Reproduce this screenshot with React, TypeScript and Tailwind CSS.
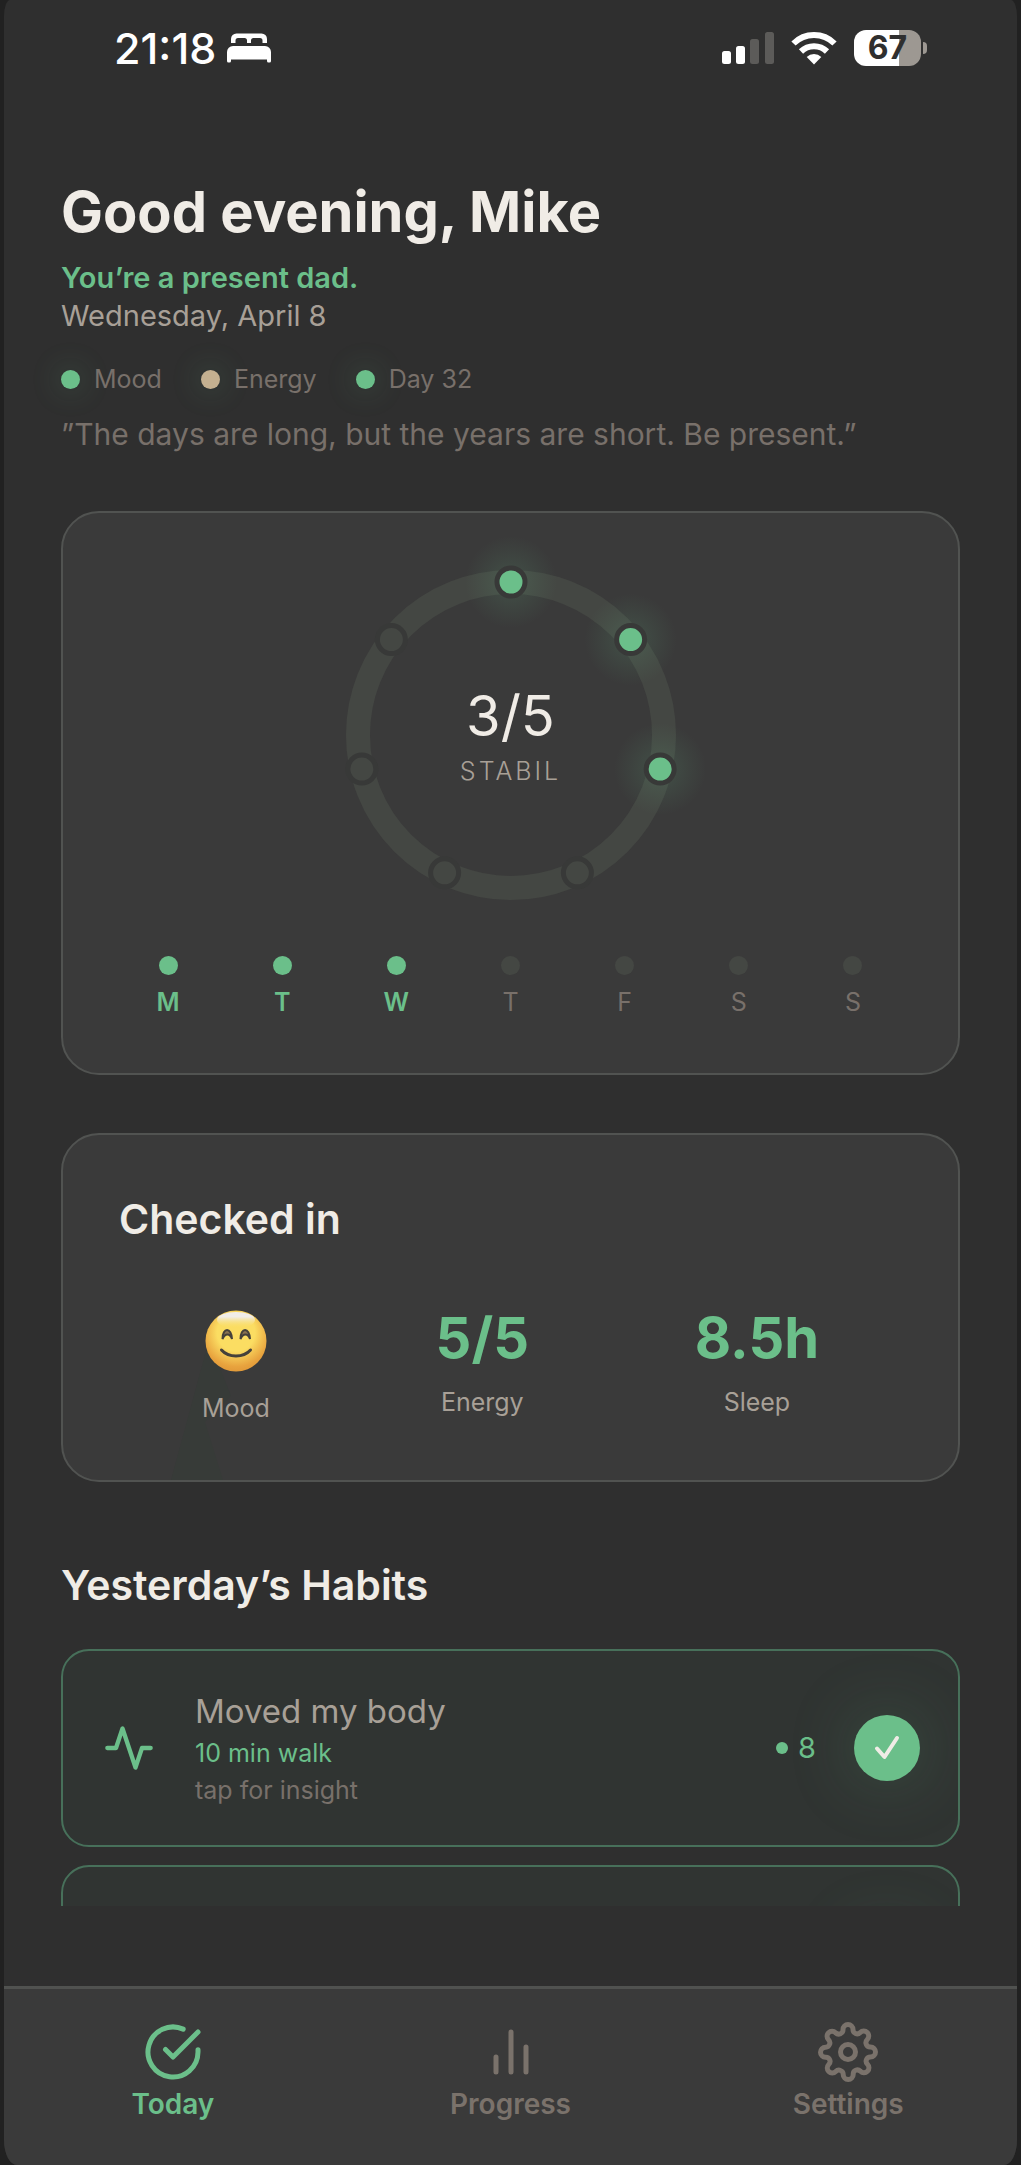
import type { ReactNode } from "react";

const GREEN = "#6bbf8a";

const signals = [
  { label: "Mood", dot: "bg-[#6bbf8a]" },
  { label: "Energy", dot: "bg-[#c4b090]" },
  { label: "Day 32", dot: "bg-[#6bbf8a]" },
];

const week = ["M", "T", "W", "T", "F", "S", "S"];
const daysDone = 3;

function StatusBar() {
  return (
    <div className="flex h-24 shrink-0 items-center justify-between pl-[110px] pr-[90px] text-white">
      <div className="flex items-center gap-[11px]">
        <span className="text-[43px] leading-none font-medium">21:18</span>
        <svg width="44" height="30" viewBox="0 0 44 30" fill="currentColor" aria-label="Sleep focus">
          <path d="M4 10V6a5.500 5.500 0 0 1 5.500-5.500h25A5.500 5.500 0 0 1 40 6v4h-4.500V7.500a2.500 2.500 0 0 0-2.500-2.500h-6.500a2.500 2.500 0 0 0-2.500 2.500V10h-4V7.500A2.500 2.500 0 0 0 17.500 5H11a2.500 2.500 0 0 0-2.500 2.500V10z" />
          <path d="M0 19a6 6 0 0 1 6-6h32a6 6 0 0 1 6 6v9a1.500 1.500 0 0 1-1.500 1.500h-1A1.500 1.500 0 0 1 40 28v-1.500H4V28a1.500 1.500 0 0 1-1.500 1.500h-1A1.500 1.500 0 0 1 0 28z" />
        </svg>
      </div>
      <div className="flex items-center gap-[17px]">
        <svg width="52" height="34" viewBox="0 0 52 34" aria-label="Signal">
          <rect x="0" y="20" width="9" height="13" rx="2.500" fill="#fff" />
          <rect x="14" y="15" width="9" height="18" rx="2.500" fill="#fff" />
          <rect x="28" y="8" width="9" height="25" rx="2.500" fill="#5c5b59" />
          <rect x="43" y="1" width="9" height="32" rx="2.500" fill="#5c5b59" />
        </svg>
        <svg width="46" height="34" viewBox="0 0 46 34" aria-label="Wi-Fi">
          <g fill="none" stroke="#fff" strokeWidth="6">
            <path d="M2.500 12.500a29 29 0 0 1 41 0" />
            <path d="M10 20.500a18.500 18.500 0 0 1 26 0" />
          </g>
          <path d="M23 33.500l-7.300-7.500a10.500 10.500 0 0 1 14.600 0z" fill="#fff" />
        </svg>
        <div className="flex items-center gap-0.5">
          <div className="flex h-9 w-[67px] items-center justify-center rounded-[12px] bg-linear-to-r from-white from-67% to-[#9d9892] to-67% text-[32px] leading-none font-bold text-[#2f2f2f]">
            67
          </div>
          <div className="h-3 w-1 rounded-r-full bg-[#9d9892]" />
        </div>
      </div>
    </div>
  );
}

function WeekRing() {
  const points = week.map((_, i) => {
    const a = (i / week.length) * Math.PI * 2 - Math.PI / 2;
    return { x: 165 + 153 * Math.cos(a), y: 165 + 153 * Math.sin(a), on: i < daysDone };
  });

  return (
    <div className="relative mx-auto size-[330px]">
      <svg width="330" height="330" viewBox="0 0 330 330" className="overflow-visible">
        <defs>
          <radialGradient id="dotGlow">
            <stop offset="0.3" stopColor={GREEN} stopOpacity="0.12" />
            <stop offset="0.7" stopColor={GREEN} stopOpacity="0.05" />
            <stop offset="1" stopColor={GREEN} stopOpacity="0" />
          </radialGradient>
        </defs>
        <circle cx="165" cy="165" r="153" fill="none" stroke="#444743" strokeWidth="24" />
        {points.map((p, i) => (
          <g key={i}>
            {p.on && <circle cx={p.x} cy={p.y} r="46" fill="url(#dotGlow)" />}
            <circle cx={p.x} cy={p.y} r="14" fill={p.on ? GREEN : "#444743"} stroke="#383938" strokeWidth="5" />
          </g>
        ))}
      </svg>
      {/* score sits in the middle of the ring */}
      <div className="absolute inset-0 flex flex-col items-center justify-center pt-2">
        <span className="text-[56px] leading-[64px] text-[#f0ece6]">3/5</span>
        <span className="text-[25px] leading-[46px] font-light tracking-[3px] text-[#a8a097]">STABIL</span>
      </div>
    </div>
  );
}

function Card({ children, className }: { children: ReactNode; className: string }) {
  return (
    <section className={`relative rounded-[38px] border-2 border-[#515351] bg-[#3a3a3a] ${className}`}>
      {children}
    </section>
  );
}

function Stat({ label, children }: { label: string; children: ReactNode }) {
  return (
    <div className="flex flex-col items-center gap-3.5">
      {children}
      <span className="text-[25px] leading-9 text-[#a8a097]">{label}</span>
    </div>
  );
}

function Smiley() {
  return (
    <svg width="62" height="70" viewBox="0 0 62 70" role="img" aria-label="Happy">
      <defs>
        <radialGradient id="face" cx="0.5" cy="0.36" r="0.62">
          <stop offset="0.5" stopColor="#fbdd62" />
          <stop offset="0.9" stopColor="#e8a33e" />
          <stop offset="1" stopColor="#e39c3a" />
        </radialGradient>
        <linearGradient id="shine" x1="0" y1="0" x2="0" y2="1">
          <stop offset="0.3" stopColor="#f1ede8" />
          <stop offset="1" stopColor="#fbdd62" stopOpacity="0" />
        </linearGradient>
      </defs>
      <circle cx="31" cy="35" r="30.500" fill="url(#face)" />
      <ellipse cx="31" cy="14" rx="19" ry="8" fill="url(#shine)" />
      <g fill="#8a7350" stroke="#45413b" strokeLinecap="round" strokeWidth="2">
        <path d="M17.500 33c0-12 9-12 9.500 0-2-6-7-6-9.500 0z" />
        <path d="M35.500 33c0-12 9-12 9.500 0-2-6-7-6-9.500 0z" />
        <path d="M16.500 44c7 8 22 8 29 0" fill="none" strokeWidth="3" />
      </g>
    </svg>
  );
}

function CheckButton() {
  return (
    <button
      aria-label="Habit done"
      className="flex size-[66px] items-center justify-center rounded-full bg-[#6bbf8a] shadow-[0_0_70px_rgba(107,191,138,0.22)]"
    >
      <svg width="26" height="26" viewBox="0 0 26 26" fill="none" stroke="#f0ece6" strokeWidth="4" strokeLinecap="round" strokeLinejoin="round">
        <path d="M3 13.500l7.500 8.500L23 3" />
      </svg>
    </button>
  );
}

function HabitCard({ children }: { children?: ReactNode }) {
  return (
    <li className="flex min-h-[198px] items-center overflow-hidden rounded-[28px] border-2 border-[#47705a] bg-[#303432] pl-10 pr-[38px]">
      <div className="flex flex-1 items-center">{children}</div>
      <CheckButton />
    </li>
  );
}

function NavItem({ label, active, children }: { label: string; active?: boolean; children: ReactNode }) {
  return (
    <a
      href="#"
      className={`flex flex-1 flex-col items-center gap-1 pt-[33px] pb-[43px] ${active ? "text-[#6bbf8a]" : "text-[#7a726b]"}`}
    >
      <svg width="60" height="60" viewBox="0 0 24 24" fill="none" stroke="currentColor" strokeWidth="2" strokeLinecap="round" strokeLinejoin="round">
        {children}
      </svg>
      <span className="text-[28px] leading-9 font-semibold">{label}</span>
    </a>
  );
}

export default function App() {
  return (
    <div className="h-screen overflow-hidden bg-[#212121] px-1 font-['Inter','Liberation_Sans',sans-serif]">
      <div className="flex h-full flex-col overflow-hidden bg-[#2f2f2f] [border-radius:6px_6px_13px_13px/16px_16px_25px_25px]">
        <StatusBar />

        <main className="min-h-0 flex-1 overflow-hidden px-[57px] pt-20">
          <h1 className="text-[56px] leading-[72px] font-bold text-[#f0ece6]">Good evening, Mike</h1>
          <p className="mt-[11px] text-[29px] leading-[38px] font-semibold text-[#6bbf8a]">You’re a present dad.</p>
          <p className="text-[29px] leading-[38px] text-[#a8a097]">Wednesday, April 8</p>

          <ul className="mt-[26px] flex gap-[39px]">
            {signals.map((s) => (
              <li key={s.label} className="flex items-center gap-3.5 text-[25px] leading-9 text-[#78706a]">
                <span className={`size-[19px] rounded-full shadow-[0_0_30px_4px_rgba(107,191,138,0.16)] ${s.dot}`} />
                {s.label}
              </li>
            ))}
          </ul>

          <p className="mt-[18px] text-[30px] leading-[38px] text-[#78706a]">
            ”The days are long, but the years are short. Be present.”
          </p>

          <Card className="mt-[58px] px-12 pt-[57px] pb-[55px]">
            <WeekRing />
            <div className="mt-14 grid grid-cols-7">
              {week.map((d, i) => (
                <div key={i} className="flex flex-col items-center gap-[11px]">
                  <span className={`size-[19px] rounded-full ${i < daysDone ? "bg-[#6bbf8a]" : "bg-[#444743]"}`} />
                  <span className={`text-[25px] leading-8 ${i < daysDone ? "font-semibold text-[#6bbf8a]" : "text-[#78706a]"}`}>
                    {d}
                  </span>
                </div>
              ))}
            </div>
          </Card>

          <Card className="mt-[58px] px-14 pt-[58px] pb-[54px]">
            <svg className="absolute bottom-0 left-[108px]" width="64" height="140" viewBox="0 0 64 140" aria-hidden="true">
              <path d="M38 0l-38 140h52L34 82l26-26z" fill="#373b38" />
            </svg>
            <div className="relative">
              <h2 className="text-[41px] leading-[52px] font-semibold text-[#f0ece6]">Checked in</h2>
              <div className="mt-[61px] flex items-start justify-around">
                <Stat label="Mood">
                  <Smiley />
                </Stat>
                <Stat label="Energy">
                  <span className="text-[56px] leading-[64px] font-bold text-[#6bbf8a]">5/5</span>
                </Stat>
                <Stat label="Sleep">
                  <span className="text-[56px] leading-[64px] font-bold text-[#6bbf8a]">8.5h</span>
                </Stat>
              </div>
            </div>
          </Card>

          <h2 className="mt-[77px] text-[41px] leading-[52px] font-semibold text-[#f0ece6]">Yesterday’s Habits</h2>
          <ul className="mt-[38px] flex flex-col gap-[18px]">
            <HabitCard>
              <svg width="52" height="52" viewBox="0 0 24 24" fill="none" stroke={GREEN} strokeWidth="2" strokeLinecap="round" strokeLinejoin="round">
                <polyline points="22 12 18 12 15 21 9 3 6 12 2 12" />
              </svg>
              <div className="ml-10">
                <h3 className="text-[33px] leading-[46px] text-[#a8a097]">Moved my body</h3>
                <p className="text-[25px] leading-[38px] text-[#6bbf8a]">10 min walk</p>
                <p className="text-[25px] leading-9 text-[#78706a]">tap for insight</p>
              </div>
              <div className="mr-[38px] ml-auto flex items-center gap-2.5 text-[29px] leading-9 text-[#6bbf8a]">
                <span className="size-3 rounded-full bg-[#6bbf8a]" />8
              </div>
            </HabitCard>
            <HabitCard />
          </ul>
        </main>

        <nav className="mt-20 flex shrink-0 border-t-[3px] border-[#505250] bg-[#3a3a3a]">
          <NavItem label="Today" active>
            <path d="M22 11.080V12a10 10 0 1 1-5.930-9.140" />
            <polyline points="22 4 12 14.010 9 11.010" />
          </NavItem>
          <NavItem label="Progress">
            <path d="M18 20V10M12 20V4M6 20v-6" />
          </NavItem>
          <NavItem label="Settings">
            <circle cx="12" cy="12" r="3" />
            <path d="M19.400 15a1.650 1.650 0 0 0 .330 1.820l.060.060a2 2 0 0 1 0 2.830 2 2 0 0 1-2.830 0l-.060-.060a1.650 1.650 0 0 0-1.820-.330 1.650 1.650 0 0 0-1 1.510V21a2 2 0 0 1-2 2 2 2 0 0 1-2-2v-.090A1.650 1.650 0 0 0 9 19.400a1.650 1.650 0 0 0-1.820.330l-.060.060a2 2 0 0 1-2.830 0 2 2 0 0 1 0-2.830l.060-.060a1.650 1.650 0 0 0 .330-1.820 1.650 1.650 0 0 0-1.510-1H3a2 2 0 0 1-2-2 2 2 0 0 1 2-2h.090A1.650 1.650 0 0 0 4.600 9a1.650 1.650 0 0 0-.330-1.820l-.060-.060a2 2 0 0 1 0-2.830 2 2 0 0 1 2.830 0l.060.060a1.650 1.650 0 0 0 1.820.330H9a1.650 1.650 0 0 0 1-1.510V3a2 2 0 0 1 2-2 2 2 0 0 1 2 2v.090a1.650 1.650 0 0 0 1 1.510 1.650 1.650 0 0 0 1.820-.330l.060-.060a2 2 0 0 1 2.830 0 2 2 0 0 1 0 2.830l-.060.060a1.650 1.650 0 0 0-.330 1.820V9a1.650 1.650 0 0 0 1.510 1H21a2 2 0 0 1 2 2 2 2 0 0 1-2 2h-.090a1.650 1.650 0 0 0-1.510 1z" />
          </NavItem>
        </nav>
      </div>
    </div>
  );
}
